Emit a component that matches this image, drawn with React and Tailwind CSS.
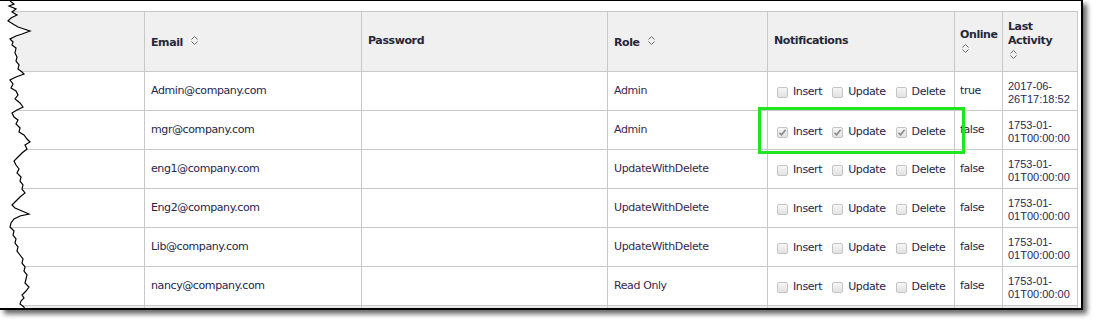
import React from "react";

const USERS = [
  { email: "Admin@company.com", role: "Admin", checked: false, online: "true", last: ["2017-06-", "26T17:18:52"] },
  { email: "mgr@company.com", role: "Admin", checked: true, online: "false", last: ["1753-01-", "01T00:00:00"] },
  { email: "eng1@company.com", role: "UpdateWithDelete", checked: false, online: "false", last: ["1753-01-", "01T00:00:00"] },
  { email: "Eng2@company.com", role: "UpdateWithDelete", checked: false, online: "false", last: ["1753-01-", "01T00:00:00"] },
  { email: "Lib@company.com", role: "UpdateWithDelete", checked: false, online: "false", last: ["1753-01-", "01T00:00:00"] },
  { email: "nancy@company.com", role: "Read Only", checked: false, online: "false", last: ["1753-01-", "01T00:00:00"] },
];

const TORN = [
  [10,0],[14,3],[9,5],[16,8],[12,11],[17,14],[11,17],[8,20],[13,23],[18,26],[24,28],[30,30],[22,33],[16,35],[10,38],
  [13,41],[12,44],[16,47],[15,52],[17,56],[16,60],[19,64],[18,68],[22,71],[24,73],[16,76],[10,79],[13,83],[11,87],
  [16,90],[18,94],[15,98],[20,102],[23,106],[17,109],[12,112],[14,116],[18,119],[16,123],[20,127],[19,131],[24,134],
  [27,138],[30,141],[25,144],[27,148],[22,152],[18,156],[14,160],[16,164],[19,168],[17,172],[21,176],[20,180],
  [23,184],[22,188],[25,192],[20,196],[16,200],[12,204],[15,207],[22,210],[29,213],[20,215],[14,218],[11,222],
  [10,226],[14,230],[13,234],[16,238],[15,242],[18,246],[17,250],[20,254],[23,258],[22,262],[25,266],[24,270],
  [27,274],[26,278],[25,282],[29,286],[26,290],[22,294],[24,297],[21,300],[20,303],[24,306],[25,312],
];

function SortIcon({ className = "" }) {
  return (
    <svg width="9" height="11" viewBox="0 0 9 11" className={className} fill="none" stroke="#6b6b6b" strokeWidth="1">
      <path d="M1.5 4.5 L4.5 1.5 L7.5 4.5" />
      <path d="M1.5 6.5 L4.5 9.5 L7.5 6.5" />
    </svg>
  );
}

function Check({ checked, label }) {
  return (
    <span className="inline-flex items-center">
      <span className="w-[11px] h-[11px] rounded-[2px] border border-[#c4c4c4] bg-gradient-to-b from-[#f6f6f6] to-[#e2e2e2] flex items-center justify-center">
        {checked && (
          <svg width="9" height="9" viewBox="0 0 9 9" fill="none" stroke="#8a8a8a" strokeWidth="1.6">
            <path d="M1.5 4.8 L3.6 6.8 L7.6 1.8" />
          </svg>
        )}
      </span>
      <span className="ml-[5px]">{label}</span>
    </span>
  );
}

export default function App() {
  const tornPts = TORN.map(([x, y]) => `${x},${y}`).join(" ");
  return (
    <div className="w-[1097px] h-[325px] bg-white overflow-hidden" style={{ fontFamily: "'DejaVu Sans', Verdana, sans-serif" }}>
      <div className="relative w-[1083px] h-[310px] bg-white border-t border-r-2 border-b-2 border-black shadow-[4px_4px_5px_rgba(0,0,0,0.6)] overflow-hidden pt-[10px]">
        <table className="table-fixed border-collapse w-[1077px] text-[11px] tracking-[-0.4px] text-[#25254a]">
          <colgroup>
            <col className="w-[144px]" />
            <col className="w-[217px]" />
            <col className="w-[246px]" />
            <col className="w-[160px]" />
            <col className="w-[187px]" />
            <col className="w-[48px]" />
            <col className="w-[75px]" />
          </colgroup>
          <thead>
            <tr className="h-[60px] bg-[#f0f0f0] text-[#26263a] font-semibold">
              <th className="border border-[#c8c8c8]" />
              <th className="border border-[#c8c8c8] px-[6px] text-left align-middle">
                <span className="inline-flex items-center pt-[3px]">
                  <span>Email</span>
                  <SortIcon className="ml-[7px] -mt-[5px]" />
                </span>
              </th>
              <th className="border border-[#c8c8c8] px-[6px] text-left align-middle">Password</th>
              <th className="border border-[#c8c8c8] px-[6px] text-left align-middle">
                <span className="inline-flex items-center pt-[3px]">
                  <span>Role</span>
                  <SortIcon className="ml-[7px] -mt-[5px]" />
                </span>
              </th>
              <th className="border border-[#c8c8c8] px-[6px] text-left align-middle">Notifications</th>
              <th className="border border-[#c8c8c8] px-[5px] pb-[2px] text-left align-middle leading-[14px]">
                <div>Online</div>
                <SortIcon className="mt-[1px] ml-[1px]" />
              </th>
              <th className="border border-[#c8c8c8] px-[5px] pb-[3px] text-left align-middle leading-[14px]">
                <div>Last</div>
                <div>Activity</div>
                <SortIcon className="mt-[1px] ml-[1px]" />
              </th>
            </tr>
          </thead>
          <tbody>
            {USERS.map((u) => (
              <tr key={u.email} className="h-[39px]">
                <td className="border border-[#c8c8c8]" />
                <td className="border border-[#c8c8c8] px-[6px] align-middle">{u.email}</td>
                <td className="border border-[#c8c8c8]" />
                <td className="border border-[#c8c8c8] px-[6px] align-middle text-[#3a1f4d]">{u.role}</td>
                <td className="border border-[#c8c8c8] pl-[9px] pt-[6px] align-middle whitespace-nowrap">
                  <span className="inline-flex items-center gap-[10px]">
                    <Check checked={u.checked} label="Insert" />
                    <Check checked={u.checked} label="Update" />
                    <Check checked={u.checked} label="Delete" />
                  </span>
                </td>
                <td className="border border-[#c8c8c8] px-[5px] align-middle">{u.online}</td>
                <td
                  className="border border-[#c8c8c8] px-[5px] pt-[3px] align-middle text-[11px] leading-[13px] tracking-normal text-[#1f2a55]"
                  style={{ fontFamily: "'Liberation Sans', Arial, sans-serif" }}
                >
                  <div>{u.last[0]}</div>
                  <div>{u.last[1]}</div>
                </td>
              </tr>
            ))}
            <tr className="h-[20px] bg-[#ececec]">
              <td className="border border-[#c8c8c8]" />
              <td className="border border-[#c8c8c8]" />
              <td className="border border-[#c8c8c8]" />
              <td className="border border-[#c8c8c8]" />
              <td className="border border-[#c8c8c8]" />
              <td className="border border-[#c8c8c8]" />
              <td className="border border-[#c8c8c8]" />
            </tr>
          </tbody>
        </table>

        {/* torn left edge */}
        <svg className="absolute left-0 top-0" width="40" height="312" viewBox="0 0 40 312">
          <polygon points={`0,0 ${tornPts} 0,312`} fill="#ffffff" />
          <polyline points={tornPts} fill="none" stroke="#000" strokeWidth="1.2" />
        </svg>

        {/* green highlight */}
        <div className="absolute left-[758px] top-[106px] w-[207px] h-[47px] border-[3px] border-[#1fe61f]" />
      </div>
    </div>
  );
}
